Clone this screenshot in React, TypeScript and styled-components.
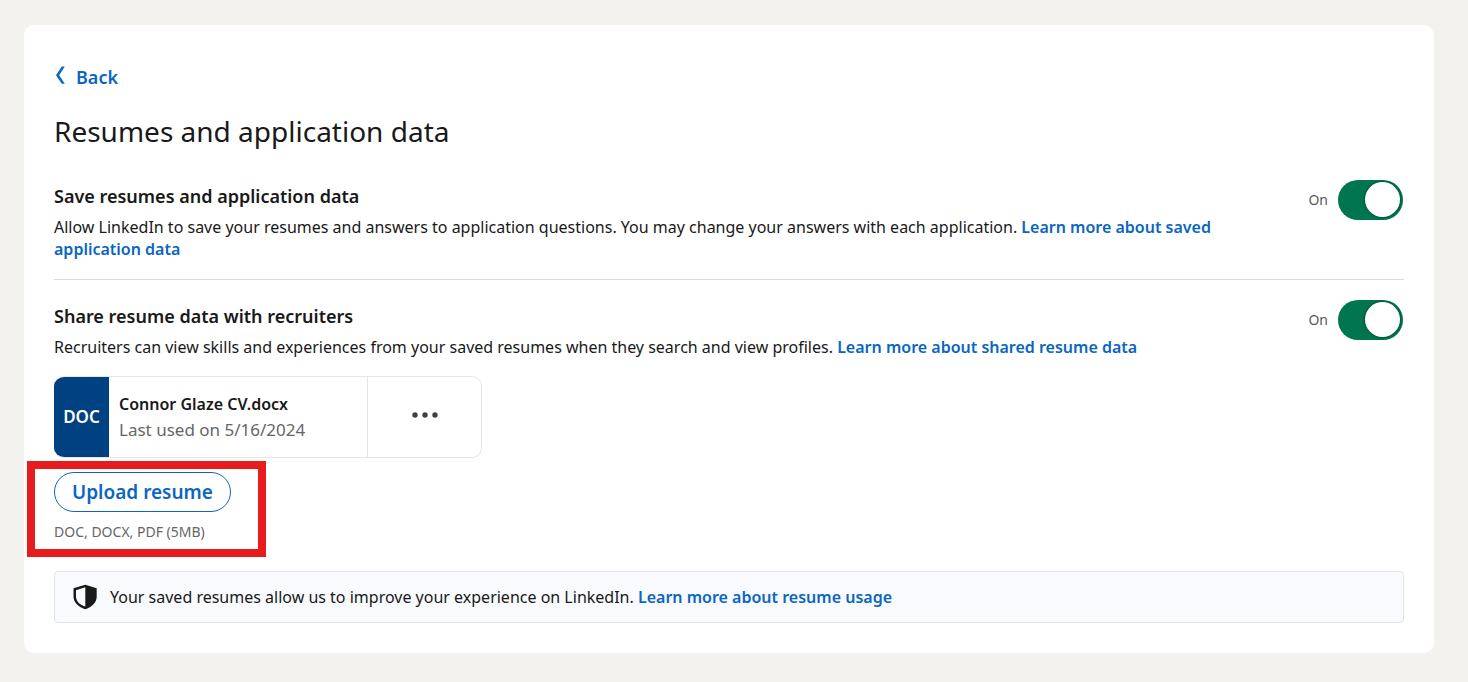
import React, { useId, useState } from "react";
import styled, { createGlobalStyle } from "styled-components";

const GlobalStyle = createGlobalStyle`
  *, *::before, *::after { box-sizing: border-box; }
  body {
    margin: 0;
    background: #f3f2ee;
    color: #191919;
    font-family: "Segoe UI", "Noto Sans", "Open Sans", sans-serif;
    font-size: 16px;
    line-height: 22px;
  }
  h1, h2, p { margin: 0; }
  button { font: inherit; cursor: pointer; }
`;

const Page = styled.div`
  padding: 25px 34px 29px 24px;
`;

const Card = styled.main`
  padding: 40px 30px 30px;
  background: #fff;
  border-radius: 10px;
`;

const BackLink = styled.a`
  display: flex;
  width: max-content;
  align-items: center;
  gap: 10px;
  color: #0a66c2;
  font-size: 18px;
  font-weight: 600;
  line-height: 24px;
  text-decoration: none;
`;

const Title = styled.h1`
  margin: 22px 0 29px;
  font-size: 28px;
  font-weight: 400;
  line-height: 40px;
`;

const SettingRow = styled.section<{ $divided?: boolean }>`
  display: flex;
  align-items: flex-start;
  gap: 24px;
  padding-bottom: ${(p) => (p.$divided ? 19 : 18)}px;
  border-bottom: ${(p) => (p.$divided ? "1px solid #d9d9d9" : "0")};
  margin-bottom: ${(p) => (p.$divided ? 20 : 0)}px;
`;

const SettingText = styled.div`
  flex: 1;
  min-width: 0;
  padding-top: 4px;
`;

const SettingTitle = styled.h2`
  margin-bottom: 8px;
  font-size: 18px;
  font-weight: 600;
  line-height: 24px;
`;

const TextLink = styled.a`
  color: #0a66c2;
  font-weight: 600;
  text-decoration: none;
`;

const SwitchLabel = styled.label`
  display: flex;
  align-items: center;
  gap: 10px;
  color: #595959;
  font-size: 14px;
  line-height: 20px;
  cursor: pointer;
`;

const SwitchInput = styled.input`
  appearance: none;
  display: flex;
  align-items: center;
  width: 65px;
  height: 40px;
  margin: 0 1px 0 0;
  padding: 0 3px 1px 2px;
  border-radius: 20px;
  background: #7a7a7a;
  cursor: pointer;

  &::before {
    content: "";
    width: 35px;
    height: 35px;
    border-radius: 50%;
    background: #fff;
    box-shadow: 0 0 3px rgba(0, 0, 0, 0.5);
  }
  &:checked { background: #01754f; justify-content: flex-end; }
`;

const FileCard = styled.div`
  display: grid;
  grid-template-columns: 55px 1fr 114px;
  width: 428px;
  max-width: 100%;
  height: 82px;
  border: 1px solid #e6e6e6;
  border-left: 0;
  border-radius: 10px;
  overflow: hidden;
`;

const FileType = styled.div`
  display: grid;
  place-items: center;
  background: #004182;
  color: #fff;
  font-size: 17px;
  font-weight: 600;
`;

const FileInfo = styled.div`
  display: flex;
  flex-direction: column;
  justify-content: center;
  padding-left: 10px;
  line-height: 25px;
`;

const FileName = styled.span`
  font-weight: 600;
`;

const FileMeta = styled.span`
  color: #666;
  font-size: 17px;
`;

const MoreButton = styled.button`
  display: grid;
  place-items: center;
  padding: 0 0 4px;
  border: 0;
  border-left: 1px solid #e6e6e6;
  background: #fff;
`;

const UploadArea = styled.div`
  position: relative;
  display: flex;
  flex-direction: column;
  align-items: flex-start;
  gap: 10px;
  width: max-content;
  margin: 14px 0 29px;
`;

const Highlight = styled.div`
  position: absolute;
  inset: -11px -35px -15px -27px;
  border: 8px solid #e81c1c;
  pointer-events: none;
`;

const UploadButton = styled.button`
  height: 40px;
  padding: 0 17px;
  border: 1px solid #0a66c2;
  border-radius: 20px;
  background: #fff;
  color: #0a66c2;
  font-size: 19px;
  font-weight: 600;
`;

const Hint = styled.p`
  color: #666;
  font-size: 14px;
  line-height: 20px;
`;

const Notice = styled.aside`
  display: flex;
  align-items: center;
  gap: 12px;
  min-height: 52px;
  padding: 0 18px;
  border: 1px solid #e1e4e6;
  border-radius: 4px;
  background: #f8fafd;
`;

function ChevronIcon() {
  return (
    <svg width="12" height="24" viewBox="0 0 12 24" aria-hidden="true">
      <path d="M7.8 1.5h3L5.2 10.2l5.6 8.6h-3L2 10.2z" fill="#0a66c2" />
    </svg>
  );
}

function MoreIcon() {
  return (
    <svg width="28" height="8" viewBox="0 0 28 8" fill="#404040" aria-hidden="true">
      <circle cx="4" cy="4" r="2.7" />
      <circle cx="14" cy="4" r="2.7" />
      <circle cx="24" cy="4" r="2.7" />
    </svg>
  );
}

function ShieldIcon() {
  return (
    <svg width="25" height="26" viewBox="0 0 25 26" aria-hidden="true">
      <path
        d="M12.3 .7 23.7 4.2v8.1c0 6-3.9 10.5-11.4 13C4.8 22.8.5 18.3.5 12.3V4.2zM12.3 3.3 3 6.2v6.1c0 4.8 3.2 8.2 9.3 10.3z"
        fill="#191919"
        fillRule="evenodd"
      />
    </svg>
  );
}

function Switch({ name }: { name: string }) {
  const [on, setOn] = useState(true);
  const id = useId();
  return (
    <SwitchLabel htmlFor={id}>
      <span>{on ? "On" : "Off"}</span>
      <SwitchInput
        id={id}
        type="checkbox"
        role="switch"
        name={name}
        checked={on}
        onChange={(e) => setOn(e.target.checked)}
      />
    </SwitchLabel>
  );
}

export default function App() {
  return (
    <Page>
      <GlobalStyle />
      <Card>
        <BackLink href="#back">
          <ChevronIcon />
          Back
        </BackLink>
        <Title>Resumes and application data</Title>

        <SettingRow $divided>
          <SettingText>
            <SettingTitle>Save resumes and application data</SettingTitle>
            <p>
              Allow LinkedIn to save your resumes and answers to application questions. You may change your
              answers with each application.{" "}
              <TextLink href="#saved">Learn more about saved application data</TextLink>
            </p>
          </SettingText>
          <Switch name="save" />
        </SettingRow>

        <SettingRow>
          <SettingText>
            <SettingTitle>Share resume data with recruiters</SettingTitle>
            <p>
              Recruiters can view skills and experiences from your saved resumes when they search and view
              profiles. <TextLink href="#shared">Learn more about shared resume data</TextLink>
            </p>
          </SettingText>
          <Switch name="share" />
        </SettingRow>

        <FileCard>
          <FileType>DOC</FileType>
          <FileInfo>
            <FileName>Connor Glaze CV.docx</FileName>
            <FileMeta>Last used on 5/16/2024</FileMeta>
          </FileInfo>
          <MoreButton type="button" title="More options">
            <MoreIcon />
          </MoreButton>
        </FileCard>

        <UploadArea>
          <UploadButton type="button">Upload resume</UploadButton>
          <Hint>DOC, DOCX, PDF (5MB)</Hint>
          <Highlight />
        </UploadArea>

        <Notice>
          <ShieldIcon />
          <p>
            Your saved resumes allow us to improve your experience on LinkedIn.{" "}
            <TextLink href="#usage">Learn more about resume usage</TextLink>
          </p>
        </Notice>
      </Card>
    </Page>
  );
}
